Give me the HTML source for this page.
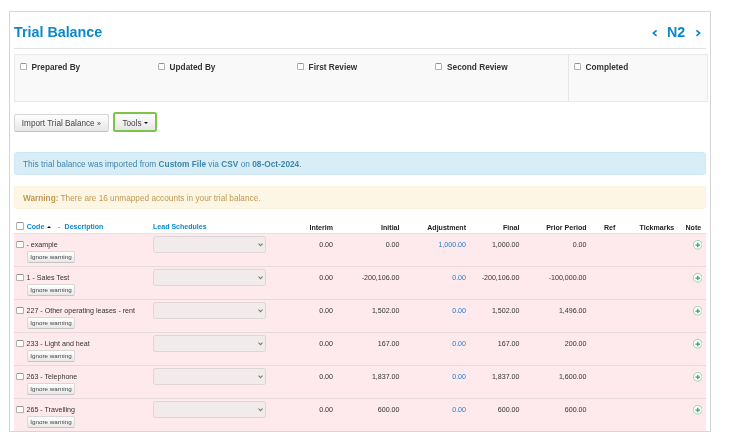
<!DOCTYPE html>
<html><head><meta charset="utf-8">
<style>
*{box-sizing:border-box;margin:0;padding:0}
html,body{width:730px;height:448px;overflow:hidden;background:#fff}
body{font-family:"Liberation Sans",sans-serif;color:#333;position:relative}
#root{position:absolute;left:0;top:0;width:730px;height:448px;will-change:transform}
.a{position:absolute;white-space:nowrap}
#box{position:absolute;left:9px;top:11px;width:702px;height:421px;border:1px solid #d6d6d6}
.title{left:14px;top:23px;font-size:14.3px;font-weight:bold;color:#0a88cf;line-height:18px}
.nav{top:23px;font-size:14.3px;font-weight:bold;color:#0a88cf;line-height:18px}
#hline{position:absolute;left:14px;top:47.5px;width:692px;height:1px;background:#e3e3e3}
#signoff{position:absolute;left:14px;top:54px;width:693.5px;height:47.5px;background:#f9f9f9;border:1px solid #e9e9e9}
#divider{position:absolute;left:568px;top:54px;width:1px;height:47px;background:#e6e6e6}
.so{top:62.3px;font-size:8.25px;font-weight:bold;color:#333;line-height:12px}
.cb{position:absolute;width:7px;height:7px;border:0.9px solid #b0b0b0;border-top-color:#929292;border-radius:1.5px;background:#fff}
.btn{position:absolute;border:0.8px solid #d6d6d6;border-bottom-color:#c2c2c2;border-radius:2.5px;background:linear-gradient(#fff,#e6e6e6);font-size:8.2px;color:#444;line-height:17px;text-align:center}
#tools{position:absolute;left:113.4px;top:111.8px;width:43.2px;height:20.6px;border:2px solid #7cc547;border-radius:2.5px;background:linear-gradient(#fff,#e6e6e6)}
.alert{position:absolute;left:14px;width:692px;border-radius:3px;font-size:8.25px;line-height:12px}
.info{top:152px;height:22.5px;background:#d9edf7;color:#3a87ad;border:0.6px solid #cde8f4}
.warn{top:186.2px;height:22.5px;background:#fdf6e4;color:#c09853;border:0.6px solid #faf3de}
.th{top:221.8px;font-size:7.05px;font-weight:bold;line-height:10px;color:#222}
.th.b{color:#0a88cf}
.th.n{top:223px}
.rows{position:absolute;left:14px;top:233px;width:692px;height:198px;background:#fee9ec}
.rline{position:absolute;left:14px;width:692px;height:1px;background:#e6dadd}
.td{font-size:7.1px;line-height:10px;color:#333}
.num{text-align:right}
.ign{position:absolute;left:26.8px;width:48.5px;height:12.6px;border:0.7px solid #d8d8d8;border-bottom-color:#c4c4c4;border-radius:2px;background:linear-gradient(#fff,#e8e8e8);font-size:6.25px;line-height:10.8px;color:#444;text-align:center}
.sel{position:absolute;left:153px;width:112.5px;height:16.5px;border:0.7px solid #ddd5d7;border-radius:2.5px;background:#f1ebeb}
.plus{position:absolute;left:692.6px;width:9.5px;height:9.5px}
</style></head><body><div id="root">
<div id="box"></div>
<div class="a title">Trial Balance</div>
<svg class="a" style="left:650px;top:28px" width="10" height="10" viewBox="0 0 10 10"><path d="M6.6 2.4 L3.4 5.1 L6.6 7.8" fill="none" stroke="#0a88cf" stroke-width="1.7" stroke-linejoin="miter"/></svg>
<div class="a nav" style="left:667px">N2</div>
<svg class="a" style="left:693px;top:28px" width="10" height="10" viewBox="0 0 10 10"><path d="M3.4 2.4 L6.6 5.1 L3.4 7.8" fill="none" stroke="#0a88cf" stroke-width="1.7" stroke-linejoin="miter"/></svg>
<div id="hline"></div>
<div id="signoff"></div>
<div id="divider"></div>
<div class="cb" style="left:19.8px;top:62.9px"></div><div class="a so" style="left:31.6px">Prepared By</div>
<div class="cb" style="left:157.8px;top:62.9px"></div><div class="a so" style="left:169.6px">Updated By</div>
<div class="cb" style="left:296.8px;top:62.9px"></div><div class="a so" style="left:308.6px">First Review</div>
<div class="cb" style="left:435px;top:62.9px"></div><div class="a so" style="left:447.1px">Second Review</div>
<div class="cb" style="left:573.5px;top:62.9px"></div><div class="a so" style="left:585.6px">Completed</div>

<div class="btn" style="left:14px;top:113.7px;width:94.7px;height:18px;line-height:17.5px">Import Trial Balance <span style="font-size:7px">»</span></div>
<div id="tools"><div class="a" style="left:7px;top:4.4px;font-size:8.2px;line-height:12px;color:#444">Tools</div><div class="a" style="left:28.8px;top:7.8px;width:0;height:0;border-left:2px solid transparent;border-right:2px solid transparent;border-top:2.2px solid #111"></div></div>

<div class="alert info"><div class="a" style="left:8px;top:4.6px;font-size:8.3px">This trial balance was imported from <b>Custom File</b> via <b>CSV</b> on <b>08-Oct-2024</b>.</div></div>
<div class="alert warn"><div class="a" style="left:8px;top:5.5px">
<b>Warning:</b> There are 16 unmapped accounts in your trial balance.</div></div>

<div class="cb" style="left:16px;top:222.3px;width:7.5px;height:7.3px"></div>
<div class="a th b" style="left:26.7px">Code</div>
<div class="a" style="left:47px;top:225.8px;width:0;height:0;border-left:2px solid transparent;border-right:2px solid transparent;border-bottom:2.4px solid #111"></div>
<div class="a th" style="left:58px;color:#8a9aa8">-</div>
<div class="a th b" style="left:64.6px">Description</div>
<div class="a th b" style="left:153px">Lead Schedules</div>
<div class="a th n num" style="right:397px">Interim</div>
<div class="a th n num" style="right:330.5px">Initial</div>
<div class="a th n num" style="right:264px">Adjustment</div>
<div class="a th n num" style="right:210.5px">Final</div>
<div class="a th n num" style="right:143.5px">Prior Period</div>
<div class="a th n" style="left:604px">Ref</div>
<div class="a th n" style="left:639.5px">Tickmarks</div>
<div class="a th n" style="left:685.5px">Note</div>

<div class="rows"></div>
<div class="a" style="left:14px;top:233px;width:692px;height:1px;background:#e4e4e4"></div>
<div class="cb" style="left:16.2px;top:241.2px;width:7.5px;height:7px"></div>
<div class="a td" style="left:26.5px;top:240px">- example</div>
<div class="ign" style="top:250.6px">Ignore warning</div>
<div class="sel" style="top:236px"><svg style="position:absolute;left:104px;top:6px" width="5" height="4" viewBox="0 0 5 4"><path d="M0.5 0.7 L2.5 2.7 L4.5 0.7" fill="none" stroke="#7a7a7a" stroke-width="1.1"/></svg></div>
<div class="a td num" style="right:397px;top:240px">0.00</div>
<div class="a td num" style="right:330.5px;top:240px">0.00</div>
<div class="a td num" style="right:264px;top:240px;color:#1a7fd0">1,000.00</div>
<div class="a td num" style="right:210.5px;top:240px">1,000.00</div>
<div class="a td num" style="right:143.5px;top:240px">0.00</div>
<svg class="plus" style="top:240.2px" viewBox="0 0 9.5 9.5"><circle cx="4.75" cy="4.75" r="4.35" fill="#fff" stroke="#78c392" stroke-width="0.7"/><path d="M4.75 2.75V7.35M2.45 5.05H7.05" stroke="#2fa860" stroke-width="1.25"/></svg>
<div class="rline" style="top:266px"></div>
<div class="cb" style="left:16.2px;top:274.2px;width:7.5px;height:7px"></div>
<div class="a td" style="left:26.5px;top:273px">1 - Sales Test</div>
<div class="ign" style="top:283.6px">Ignore warning</div>
<div class="sel" style="top:269px"><svg style="position:absolute;left:104px;top:6px" width="5" height="4" viewBox="0 0 5 4"><path d="M0.5 0.7 L2.5 2.7 L4.5 0.7" fill="none" stroke="#7a7a7a" stroke-width="1.1"/></svg></div>
<div class="a td num" style="right:397px;top:273px">0.00</div>
<div class="a td num" style="right:330.5px;top:273px">-200,106.00</div>
<div class="a td num" style="right:264px;top:273px;color:#1a7fd0">0.00</div>
<div class="a td num" style="right:210.5px;top:273px">-200,106.00</div>
<div class="a td num" style="right:143.5px;top:273px">-100,000.00</div>
<svg class="plus" style="top:273.2px" viewBox="0 0 9.5 9.5"><circle cx="4.75" cy="4.75" r="4.35" fill="#fff" stroke="#78c392" stroke-width="0.7"/><path d="M4.75 2.75V7.35M2.45 5.05H7.05" stroke="#2fa860" stroke-width="1.25"/></svg>
<div class="rline" style="top:299px"></div>
<div class="cb" style="left:16.2px;top:307.2px;width:7.5px;height:7px"></div>
<div class="a td" style="left:26.5px;top:306px">227 - Other operating leases - rent</div>
<div class="ign" style="top:316.6px">Ignore warning</div>
<div class="sel" style="top:302px"><svg style="position:absolute;left:104px;top:6px" width="5" height="4" viewBox="0 0 5 4"><path d="M0.5 0.7 L2.5 2.7 L4.5 0.7" fill="none" stroke="#7a7a7a" stroke-width="1.1"/></svg></div>
<div class="a td num" style="right:397px;top:306px">0.00</div>
<div class="a td num" style="right:330.5px;top:306px">1,502.00</div>
<div class="a td num" style="right:264px;top:306px;color:#1a7fd0">0.00</div>
<div class="a td num" style="right:210.5px;top:306px">1,502.00</div>
<div class="a td num" style="right:143.5px;top:306px">1,496.00</div>
<svg class="plus" style="top:306.2px" viewBox="0 0 9.5 9.5"><circle cx="4.75" cy="4.75" r="4.35" fill="#fff" stroke="#78c392" stroke-width="0.7"/><path d="M4.75 2.75V7.35M2.45 5.05H7.05" stroke="#2fa860" stroke-width="1.25"/></svg>
<div class="rline" style="top:332px"></div>
<div class="cb" style="left:16.2px;top:340.2px;width:7.5px;height:7px"></div>
<div class="a td" style="left:26.5px;top:339px">233 - Light and heat</div>
<div class="ign" style="top:349.6px">Ignore warning</div>
<div class="sel" style="top:335px"><svg style="position:absolute;left:104px;top:6px" width="5" height="4" viewBox="0 0 5 4"><path d="M0.5 0.7 L2.5 2.7 L4.5 0.7" fill="none" stroke="#7a7a7a" stroke-width="1.1"/></svg></div>
<div class="a td num" style="right:397px;top:339px">0.00</div>
<div class="a td num" style="right:330.5px;top:339px">167.00</div>
<div class="a td num" style="right:264px;top:339px;color:#1a7fd0">0.00</div>
<div class="a td num" style="right:210.5px;top:339px">167.00</div>
<div class="a td num" style="right:143.5px;top:339px">200.00</div>
<svg class="plus" style="top:339.2px" viewBox="0 0 9.5 9.5"><circle cx="4.75" cy="4.75" r="4.35" fill="#fff" stroke="#78c392" stroke-width="0.7"/><path d="M4.75 2.75V7.35M2.45 5.05H7.05" stroke="#2fa860" stroke-width="1.25"/></svg>
<div class="rline" style="top:365px"></div>
<div class="cb" style="left:16.2px;top:373.2px;width:7.5px;height:7px"></div>
<div class="a td" style="left:26.5px;top:372px">263 - Telephone</div>
<div class="ign" style="top:382.6px">Ignore warning</div>
<div class="sel" style="top:368px"><svg style="position:absolute;left:104px;top:6px" width="5" height="4" viewBox="0 0 5 4"><path d="M0.5 0.7 L2.5 2.7 L4.5 0.7" fill="none" stroke="#7a7a7a" stroke-width="1.1"/></svg></div>
<div class="a td num" style="right:397px;top:372px">0.00</div>
<div class="a td num" style="right:330.5px;top:372px">1,837.00</div>
<div class="a td num" style="right:264px;top:372px;color:#1a7fd0">0.00</div>
<div class="a td num" style="right:210.5px;top:372px">1,837.00</div>
<div class="a td num" style="right:143.5px;top:372px">1,600.00</div>
<svg class="plus" style="top:372.2px" viewBox="0 0 9.5 9.5"><circle cx="4.75" cy="4.75" r="4.35" fill="#fff" stroke="#78c392" stroke-width="0.7"/><path d="M4.75 2.75V7.35M2.45 5.05H7.05" stroke="#2fa860" stroke-width="1.25"/></svg>
<div class="rline" style="top:398px"></div>
<div class="cb" style="left:16.2px;top:406.2px;width:7.5px;height:7px"></div>
<div class="a td" style="left:26.5px;top:405px">265 - Travelling</div>
<div class="ign" style="top:415.6px">Ignore warning</div>
<div class="sel" style="top:401px"><svg style="position:absolute;left:104px;top:6px" width="5" height="4" viewBox="0 0 5 4"><path d="M0.5 0.7 L2.5 2.7 L4.5 0.7" fill="none" stroke="#7a7a7a" stroke-width="1.1"/></svg></div>
<div class="a td num" style="right:397px;top:405px">0.00</div>
<div class="a td num" style="right:330.5px;top:405px">600.00</div>
<div class="a td num" style="right:264px;top:405px;color:#1a7fd0">0.00</div>
<div class="a td num" style="right:210.5px;top:405px">600.00</div>
<div class="a td num" style="right:143.5px;top:405px">600.00</div>
<svg class="plus" style="top:405.2px" viewBox="0 0 9.5 9.5"><circle cx="4.75" cy="4.75" r="4.35" fill="#fff" stroke="#78c392" stroke-width="0.7"/><path d="M4.75 2.75V7.35M2.45 5.05H7.05" stroke="#2fa860" stroke-width="1.25"/></svg>
</div></body></html>
